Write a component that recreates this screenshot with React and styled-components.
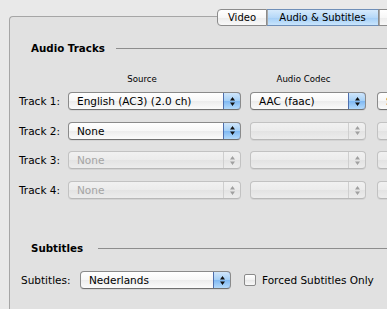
import React from "react";
import styled, { createGlobalStyle } from "styled-components";

const GlobalStyle = createGlobalStyle`
  html, body {
    margin: 0;
    padding: 0;
    background: #e9e9e9;
  }
  body {
    font-family: "DejaVu Sans", "Liberation Sans", sans-serif;
    color: #000;
  }
`;

const Window = styled.div`
  width: 387px;
  height: 309px;
  overflow: hidden;
  background: #e9e9e9;
  padding-top: 9px;
  box-sizing: border-box;
`;

const TabBar = styled.div`
  display: flex;
  margin-left: 217px;
  height: 17px;
  margin-bottom: -10px;
  position: relative;
  z-index: 1;
`;

const Tab = styled.div`
  display: flex;
  align-items: center;
  justify-content: center;
  box-sizing: border-box;
  width: ${(p) => p.$width}px;
  flex-shrink: 0;
  height: 17px;
  font-size: 10px;
  border: 1px solid #8b8b8b;
  border-left: ${(p) => (p.$first ? "1px solid #8b8b8b" : "none")};
  border-radius: ${(p) => (p.$first ? "4px 0 0 4px" : "0")};
  box-shadow: inset 1px 0 0 ${(p) => (p.$first ? "transparent" : "#a8a8a8")};
  background: ${(p) =>
    p.$active
      ? "linear-gradient(#d6eafc, #b6d8f8 50%, #a2cdf6 51%, #c9e5fc)"
      : "linear-gradient(#ffffff, #f7f7f7 50%, #ececec 51%, #f8f8f8)"};
  ${(p) => p.$active && "border-top-color: #6f8fb8; border-bottom-color: #6f8fb8;"}
`;

const Panel = styled.div`
  margin-left: 9px;
  width: 420px;
  height: 320px;
  border-top: 1px solid #a6a6a6;
  border-left: 1px solid #a6a6a6;
  border-top-left-radius: 4px;
  background: #e1e1e1;
  padding-top: 24px;
  box-sizing: border-box;
`;

const Heading = styled.div`
  display: flex;
  align-items: center;
  height: 14px;
  padding-left: 21px;
  margin-top: ${(p) => p.$top || 0}px;
`;

const HeadingTitle = styled.div`
  width: ${(p) => p.$width}px;
  flex-shrink: 0;
  font-weight: bold;
  font-size: 10.3px;
`;

const Rule = styled.div`
  flex: 1;
  height: 1px;
  background: #8d8d8d;
`;

const ColumnHeads = styled.div`
  display: flex;
  gap: 9px;
  margin-top: 18px;
  height: 12px;
  padding-left: 58px;
`;

const ColumnHead = styled.div`
  width: ${(p) => p.$width}px;
  box-sizing: border-box;
  padding-right: ${(p) => p.$shift}px;
  text-align: center;
  font-size: 8.6px;
  line-height: 12px;
`;

const Tracks = styled.div`
  display: flex;
  flex-direction: column;
  gap: 11.7px;
  margin-top: 7px;
  padding-left: 9px;
`;

const Row = styled.div`
  display: flex;
  align-items: center;
  height: 18px;
  padding-left: ${(p) => p.$indent || 0}px;
  margin-top: ${(p) => p.$top || 0}px;
`;

const Label = styled.div`
  width: ${(p) => p.$width}px;
  flex-shrink: 0;
  font-size: 10.5px;
`;

const PopUpBox = styled.div`
  display: flex;
  box-sizing: border-box;
  width: ${(p) => p.$width}px;
  flex-shrink: 0;
  height: 18px;
  margin-right: ${(p) => p.$after || 0}px;
  border: 1px solid ${(p) => (p.$disabled ? "#c2c2c2" : "#8a8a8a")};
  border-bottom-color: ${(p) => (p.$disabled ? "#b8b8b8" : "#707070")};
  border-radius: 4px;
  overflow: hidden;
  background: ${(p) =>
    p.$disabled
      ? "linear-gradient(#f1f1f1, #ebebeb 50%, #e3e3e3 51%, #ececec)"
      : "linear-gradient(#ffffff, #f7f7f7 50%, #ececec 51%, #fbfbfb)"};
  box-shadow: 0 1px 0 rgba(0, 0, 0, 0.06);
`;

const PopUpValue = styled.div`
  flex: 1;
  padding-left: 8px;
  font-size: 10.5px;
  line-height: 16px;
  white-space: nowrap;
  overflow: hidden;
  color: ${(p) => (p.$disabled ? "#a4a4a4" : "#000")};
`;

const PopUpArrows = styled.div`
  width: 17px;
  flex-shrink: 0;
  display: flex;
  align-items: center;
  justify-content: center;
  box-sizing: border-box;
  ${(p) =>
    p.$disabled
      ? "border-left: 1px solid #cfcfcf;"
      : `
    margin: -1px -1px -1px 0;
    width: 18px;
    border: 1px solid #4e6fae;
    border-radius: 0 4px 4px 0;
    background: linear-gradient(#d0e6fb, #a4cff6 50%, #7fb8f2 51%, #b4dafb);
  `}
`;

const Check = styled.div`
  width: 12px;
  height: 12px;
  box-sizing: border-box;
  border: 1px solid #8a8a8a;
  border-radius: 2px;
  background: linear-gradient(#ffffff, #f2f2f2 50%, #e8e8e8 51%, #f8f8f8);
  margin-right: 6px;
  flex-shrink: 0;
`;

const CheckLabel = styled.div`
  font-size: 10.5px;
  white-space: nowrap;
`;

const Arrows = ({ disabled }) => (
  <svg width="7" height="11" viewBox="0 0 7 11">
    <path
      d="M1 4.5 L3.5 1 L6 4.5 Z M1 6.5 L3.5 10 L6 6.5 Z"
      fill={disabled ? "#a0a0a0" : "#111"}
    />
  </svg>
);

const PopUp = ({ width, value = "", disabled, after }) => (
  <PopUpBox $width={width} $disabled={disabled} $after={after}>
    <PopUpValue $disabled={disabled}>{value}</PopUpValue>
    <PopUpArrows $disabled={disabled}>
      <Arrows disabled={disabled} />
    </PopUpArrows>
  </PopUpBox>
);

const tracks = [
  { name: "Track 1:", source: "English (AC3) (2.0 ch)", codec: "AAC (faac)", mix: "Stereo", on: true, codecOn: true },
  { name: "Track 2:", source: "None", on: true },
  { name: "Track 3:", source: "None" },
  { name: "Track 4:", source: "None" },
];

export default function App() {
  return (
    <>
      <GlobalStyle />
      <Window>
        <TabBar>
          <Tab $width={50} $first>Video</Tab>
          <Tab $width={112} $active>Audio &amp; Subtitles</Tab>
          <Tab $width={60} />
        </TabBar>
        <Panel>
          <Heading>
            <HeadingTitle $width={85}>Audio Tracks</HeadingTitle>
            <Rule />
          </Heading>
          <ColumnHeads>
            <ColumnHead $width={173} $shift={25}>Source</ColumnHead>
            <ColumnHead $width={116} $shift={9}>Audio Codec</ColumnHead>
          </ColumnHeads>
          <Tracks>
            {tracks.map((t) => (
              <Row key={t.name}>
                <Label $width={49}>{t.name}</Label>
                <PopUp width={173} after={9} value={t.source} disabled={!t.on} />
                <PopUp width={116} after={11} value={t.codec} disabled={!t.codecOn} />
                <PopUp width={80} value={t.mix} disabled={!t.codecOn} />
              </Row>
            ))}
          </Tracks>
          <Heading $top={42}>
            <HeadingTitle $width={67}>Subtitles</HeadingTitle>
            <Rule />
          </Heading>
          <Row $indent={11} $top={16}>
            <Label $width={59}>Subtitles:</Label>
            <PopUp width={151} after={13} value="Nederlands" />
            <Check />
            <CheckLabel>Forced Subtitles Only</CheckLabel>
          </Row>
        </Panel>
      </Window>
    </>
  );
}
